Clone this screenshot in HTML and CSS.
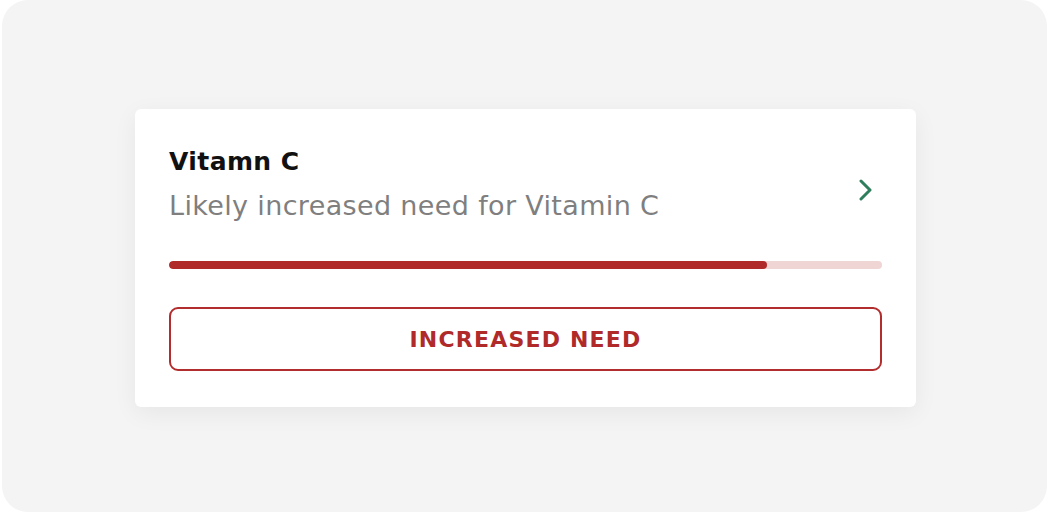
FILE: index.html
```html
<!DOCTYPE html>
<html>
<head>
<meta charset="utf-8">
<link rel="stylesheet" href="styles.css">
</head>
<body>
<div class="stage">
  <div class="card">
    <div class="head">
      <div class="texts">
        <div class="title">Vitamn C</div>
        <div class="sub">Likely increased need for Vitamin C</div>
      </div>
      <svg class="chev" width="16" height="22" viewBox="0 0 16 22"><path d="M3 2 L12 11 L3 20" fill="none" stroke="#2e7d5b" stroke-width="3" stroke-linecap="round" stroke-linejoin="round"/></svg>
    </div>
    <div class="track"><div class="fill" style="width:83.9%"></div></div>
    <div class="btn">INCREASED NEED</div>
  </div>
</div>
</body>
</html>
```
FILE: styles.css
```css
html, body { margin: 0; padding: 0; background: #fff; }
body { width: 1047px; height: 512px; overflow: hidden; font-family: "DejaVu Sans", "Liberation Sans", sans-serif; }
.stage {
  margin-left: 2px;
  width: 1045px; height: 512px;
  background: #f4f4f4;
  border-radius: 26px;
  display: flex; align-items: center; justify-content: center;
  box-sizing: border-box;
  padding-left: 2px;
  padding-top: 4px;
}
.card {
  width: 781px;
  box-sizing: border-box;
  background: #fff;
  border-radius: 6px;
  box-shadow: 0 6px 24px rgba(0,0,0,0.06);
  padding: 37px 34px 36px;
}
.head { display: flex; align-items: center; justify-content: space-between; }
.title { font-size: 25px; font-weight: 600; color: #111; line-height: 32px; letter-spacing: 0.4px; }
.sub { font-size: 27px; color: #7f7f7f; line-height: 38px; margin-top: 9px; letter-spacing: 0.35px; }
.chev { margin-right: 8px; margin-top: 9px; }
.track { margin-top: 36px; height: 8px; border-radius: 4px; background: #f0d5d5; overflow: hidden; }
.fill { height: 100%; background: #b02a2a; border-radius: 4px; }
.btn {
  margin-top: 38px; height: 64px; box-sizing: border-box;
  border: 2px solid #b22d2d; border-radius: 9px;
  display: flex; align-items: center; justify-content: center;
  color: #b02a2a; font-size: 22px; font-weight: 700; letter-spacing: 1.2px;
}
```
